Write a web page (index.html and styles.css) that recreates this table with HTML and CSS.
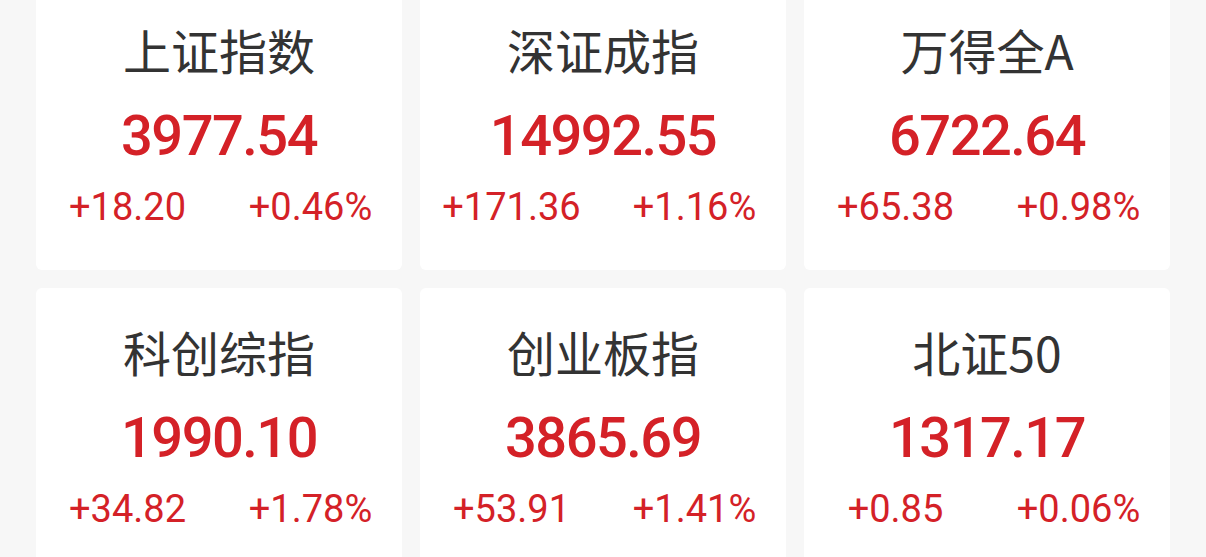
FILE: index.html
```html
<!DOCTYPE html>
<html lang="zh-CN">
<head>
    <meta charset="UTF-8">
    <meta name="viewport" content="width=device-width, initial-scale=1.0">
    <title>指数行情</title>
    <link rel="stylesheet" href="styles.css">
</head>
<body>
    <div class="index-grid">
        <div class="index-card">
            <div class="index-name">上证指数</div>
            <div class="index-price">3977.54</div>
            <div class="index-change">
                <span>+18.20</span>
                <span>+0.46%</span>
            </div>
        </div>
        <div class="index-card">
            <div class="index-name">深证成指</div>
            <div class="index-price">14992.55</div>
            <div class="index-change">
                <span>+171.36</span>
                <span>+1.16%</span>
            </div>
        </div>
        <div class="index-card">
            <div class="index-name">万得全A</div>
            <div class="index-price">6722.64</div>
            <div class="index-change">
                <span>+65.38</span>
                <span>+0.98%</span>
            </div>
        </div>
        <div class="index-card">
            <div class="index-name">科创综指</div>
            <div class="index-price">1990.10</div>
            <div class="index-change">
                <span>+34.82</span>
                <span>+1.78%</span>
            </div>
        </div>
        <div class="index-card">
            <div class="index-name">创业板指</div>
            <div class="index-price">3865.69</div>
            <div class="index-change">
                <span>+53.91</span>
                <span>+1.41%</span>
            </div>
        </div>
        <div class="index-card">
            <div class="index-name">北证50</div>
            <div class="index-price">1317.17</div>
            <div class="index-change">
                <span>+0.85</span>
                <span>+0.06%</span>
            </div>
        </div>
    </div>
</body>
</html>
```

FILE: styles.css
```css
body {
    margin: 0;
    padding: 0;
    background-color: #f7f7f7;
    font-family: Roboto, "Noto Sans CJK SC", sans-serif;
    overflow: hidden;
}
.index-grid {
    display: grid;
    grid-template-columns: repeat(3, 1fr);
    gap: 18px;
    padding: 0 36px;
    margin-top: -14px;
}
.index-card {
    background-color: #ffffff;
    border-radius: 6px;
    height: 284px;
    padding-top: 33px;
    box-sizing: border-box;
    text-align: center;
}
.index-name {
    font-family: "Noto Sans CJK SC", sans-serif;
    font-size: 48px;
    line-height: 60px;
    color: #333333;
}
.index-price {
    margin-top: 25px;
    font-size: 56px;
    line-height: 64px;
    font-weight: 500;
    letter-spacing: -1.5px;
    color: #d42127;
}
.index-change {
    display: grid;
    grid-template-columns: 1fr 1fr;
    margin-top: 17px;
    font-size: 38px;
    line-height: 44px;
    color: #d42127;
}
```
